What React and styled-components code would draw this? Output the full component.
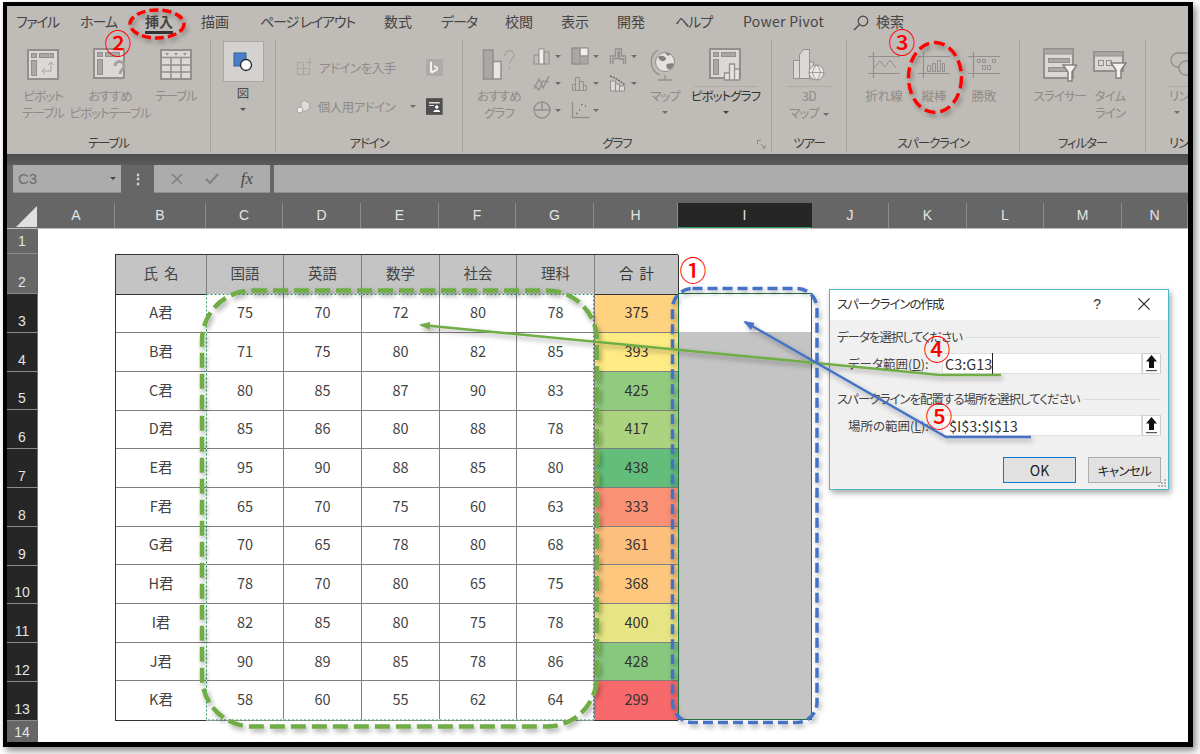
import React from 'react'
import styled, { createGlobalStyle } from 'styled-components'

const FONT = `"Noto Sans CJK JP", "Noto Sans", "Liberation Sans", sans-serif`
const DIM = '#8e8b88'
const LINE = '#928f8c'
const FILL = '#dbd9d7'
const PANEL = '#aaa8a5'

const Global = createGlobalStyle`
  html, body { margin: 0; padding: 0; background: #fff; }
  body { font-family: ${FONT}; font-feature-settings: "palt"; }
`

const Page = styled.div`
  position: relative;
  width: 1200px;
  height: 754px;
  overflow: hidden;
  background: #fff;
`
const Frame = styled.div`
  box-sizing: border-box;
  margin: 2px 0 0 3px;
  width: 1190px;
  height: 745px;
  border-style: solid;
  border-color: #000;
  border-width: 4px 5px 5px 4px;
  box-shadow: 3px 4px 7px rgba(0, 0, 0, 0.45);
  display: flex;
  flex-direction: column;
  overflow: hidden;
`

/* ribbon */
const Ribbon = styled.div`
  height: 148px;
  flex: none;
  background: #bfbbb7;
  overflow: hidden;
`
const Tabs = styled.div`
  height: 34px;
  display: flex;
  align-items: flex-start;
  padding: 5px 0 0 9px;
  box-sizing: border-box;
`
const Tab = styled.div`
  flex: none;
  width: ${(p) => p.$w}px;
  font-size: 14px;
  color: #454545;
  white-space: nowrap;
  display: flex;
  align-items: center;
  gap: 7px;
`
const TabText = styled.span`
  display: block;
  line-height: 20px;
  height: 23px;
  box-sizing: border-box;
  letter-spacing: ${(p) => p.$ls || 0}px;
  border-bottom: ${(p) => (p.$active ? '3px solid #333' : 'none')};
  font-weight: ${(p) => (p.$active ? 700 : 400)};
`
const Groups = styled.div`
  display: flex;
  height: 112px;
`
const Group = styled.div`
  flex: none;
  box-sizing: border-box;
  width: ${(p) => p.$w}px;
  display: flex;
  flex-direction: column;
  border-right: ${(p) => (p.$last ? 'none' : '1px solid #a5a29f')};
  position: relative;
`
const GroupBody = styled.div`
  height: 97px;
  display: flex;
  justify-content: ${(p) => p.$justify || 'flex-start'};
  padding-left: ${(p) => p.$pad || 0}px;
`
const GroupLabel = styled.div`
  text-align: ${(p) => (p.$left ? 'left' : 'center')};
  padding-left: ${(p) => (p.$left ? 23 : 0)}px;
  font-size: 12.5px;
  line-height: 18px;
  letter-spacing: -1.1px;
  color: #3d3d3d;
  white-space: nowrap;
`
const Launcher = styled.svg`
  position: absolute;
  right: 5px;
  bottom: 3px;
`
const BigButton = styled.div`
  flex: none;
  width: ${(p) => p.$w}px;
  display: flex;
  flex-direction: column;
  align-items: ${(p) => (p.$left ? 'flex-start' : 'center')};
  padding-left: ${(p) => (p.$left ? 23 : 0)}px;
  padding-top: 8px;
  box-sizing: border-box;
`
const IconSlot = styled.div`
  height: 34px;
  display: flex;
  align-items: center;
  justify-content: center;
`
const SplitLine = styled.div`
  flex: none;
  width: ${(p) => p.$w}px;
  height: 1px;
  margin: 4px 0 -5px;
  background: #aeaba8;
`
const BtnText = styled.div`
  margin-top: ${(p) => p.$top ?? 5}px;
  font-size: 12.5px;
  line-height: 17px;
  letter-spacing: ${(p) => (p.$kanji ? 0 : -0.9)}px;
  color: ${(p) => p.$color || DIM};
  white-space: nowrap;
  text-align: center;
`
const Caret = styled.span`
  display: inline-block;
  width: 0;
  height: 0;
  border-left: 3px solid transparent;
  border-right: 3px solid transparent;
  border-top: 3px solid ${(p) => p.$color || '#6f6d6b'};
  margin-left: ${(p) => p.$ml || 0}px;
  vertical-align: middle;
`
const CaretRow = styled.div`
  height: 16px;
  display: flex;
  align-items: center;
  justify-content: center;
`
const PictureBox = styled.div`
  width: 41px;
  height: 41px;
  margin-top: -7px;
  background: #d4d2cf;
  border: 1px solid #a9a6a3;
  display: flex;
  align-items: center;
  justify-content: center;
  box-sizing: border-box;
`
const AddinList = styled.div`
  display: flex;
  flex-direction: column;
  gap: 15px;
  padding: 15px 0 0 20px;
`
const AddinRow = styled.div`
  display: flex;
  align-items: center;
  height: 24px;
  width: 147px;
  font-size: 12.5px;
  letter-spacing: -0.5px;
  color: ${DIM};
  white-space: nowrap;
  gap: 5px;
`
const Push = styled.div`
  flex: 1;
`
const MiniGrid = styled.div`
  flex: none;
  width: 107px;
  display: grid;
  grid-template-columns: 38px 38px 30px;
  grid-auto-rows: 27px;
  padding-top: 3px;
  margin-left: -2px;
`
const MiniItem = styled.div`
  display: flex;
  align-items: center;
  gap: 3px;
`

/* formula bar */
const DarkBand = styled.div`
  height: 11px;
  flex: none;
  background: linear-gradient(#4a4a4a, #5c5c5c);
`
const FormulaBar = styled.div`
  height: 28px;
  flex: none;
  display: flex;
  background: #666;
  padding-left: 6px;
  align-items: stretch;
`
const NameBox = styled.div`
  width: 108px;
  background: #acacac;
  color: #6b6b6b;
  font-family: "Liberation Sans", sans-serif;
  font-size: 15px;
  display: flex;
  align-items: center;
  justify-content: space-between;
  padding: 0 5px;
  box-sizing: border-box;
  border-bottom: 1px solid #8f8f8f;
`
const Dots = styled.div`
  width: 33px;
  color: #ddd;
  font-weight: 700;
  font-size: 14px;
  text-align: center;
  line-height: 26px;
`
const FxBox = styled.div`
  width: 116px;
  background: #acacac;
  display: flex;
  align-items: center;
  justify-content: space-around;
  padding: 0 6px;
  box-sizing: border-box;
  border-bottom: 1px solid #8f8f8f;
`
const Fx = styled.span`
  font-family: "Liberation Serif", serif;
  font-style: italic;
  font-size: 17px;
  color: #4a4a4a;
`
const FormulaInput = styled.div`
  flex: 1;
  margin-left: 4px;
  background: #acacac;
  border-bottom: 1px solid #8f8f8f;
`

/* sheet */
const ColHeaders = styled.div`
  height: 36px;
  flex: none;
  box-sizing: border-box;
  background: #666;
  display: flex;
  align-items: flex-end;
  border-bottom: 1px solid #bcbcbc;
`
const Corner = styled.div`
  width: 31px;
  height: 25px;
  flex: none;
  display: flex;
  justify-content: flex-end;
  align-items: flex-end;
`
const ColHead = styled.div`
  flex: none;
  width: ${(p) => p.$w}px;
  height: 25px;
  box-sizing: border-box;
  text-align: center;
  font-family: "Liberation Sans", sans-serif;
  font-size: 14px;
  line-height: 25px;
  color: #e4e4e4;
  background: ${(p) => (p.$on ? '#262626' : 'transparent')};
  border-right: 1px solid ${(p) => (p.$on ? '#262626' : '#8c8c8c')};
  box-shadow: ${(p) => (p.$on ? 'inset 0 -1px 0 #2f9a5f' : 'none')};
`
const SheetArea = styled.div`
  flex: 1;
  display: flex;
  min-height: 0;
`
const RowHeaders = styled.div`
  width: 31px;
  flex: none;
  background: #666;
`
const RowHead = styled.div`
  height: ${(p) => p.$h}px;
  box-sizing: border-box;
  text-align: center;
  font-family: "Liberation Sans", sans-serif;
  font-size: 14px;
  line-height: 20px;
  color: #e4e4e4;
  display: flex;
  align-items: ${(p) => (p.$center ? 'center' : 'flex-end')};
  justify-content: center;
  padding-bottom: ${(p) => (p.$center ? 0 : 1)}px;
  background: ${(p) => (p.$on ? '#262626' : '#666')};
  border-bottom: 1px solid #8c8c8c;
  border-right: 1px solid ${(p) => (p.$on ? '#2f9a5f' : '#666')};
`
const SheetBody = styled.div`
  flex: 1;
  background: #fff;
  display: flex;
  align-items: flex-start;
  padding: 25px 0 0 77px;
`
const Table = styled.div`
  display: grid;
  grid-template-columns: 91px 77px 78px 78px 77px 78px 84px;
  grid-template-rows: 39.5px repeat(11, 38.7px);
  box-sizing: border-box;
  width: 563px;
  border-top: 1px solid #333;
  border-left: 1px solid #333;
  border-bottom: 1px solid #333;
  flex: none;
`
const Cell = styled.div`
  box-sizing: border-box;
  display: flex;
  align-items: center;
  justify-content: center;
  padding-bottom: 3px;
  font-size: 14.5px;
  word-spacing: 3px;
  color: ${(p) => (p.$edge ? '#333' : '#444')};
  white-space: pre;
  background: ${(p) => p.$bg || '#fff'};
  border-right: 1px solid ${(p) => (p.$edge ? '#333' : '#7f7f7f')};
  border-bottom: 1px solid ${(p) => (p.$head ? '#333' : p.$end ? 'transparent' : '#7f7f7f')};
`
const SelectColumn = styled.div`
  width: 134px;
  height: 427px;
  margin-top: 39px;
  flex: none;
  box-sizing: border-box;
  border: 1px solid #217346;
  background: linear-gradient(#fff 38px, #c4c4c4 38px);
`

/* dialog */
const Dialog = styled.div`
  position: absolute;
  left: 829px;
  top: 289px;
  width: 340px;
  height: 201px;
  box-sizing: border-box;
  background: #f0f0f0;
  border: 1.5px solid #4db8cc;
  box-shadow: 2px 3px 6px rgba(0, 0, 0, 0.35);
  display: flex;
  flex-direction: column;
`
const DialogTitle = styled.div`
  height: 30px;
  flex: none;
  box-sizing: border-box;
  background: #fff;
  display: flex;
  align-items: center;
  padding: 0 18px 3px 7px;
  font-size: 12.5px;
  letter-spacing: -1px;
  color: #333;
`
const HelpMark = styled.span`
  font-family: "Liberation Sans", sans-serif;
  font-size: 14px;
  margin-right: 38px;
  color: #333;
`
const Legend = styled.div`
  display: flex;
  align-items: center;
  font-size: 12.5px;
  line-height: 16px;
  letter-spacing: -1px;
  color: #444;
  padding: ${(p) => p.$top}px 8px 0 7px;
  gap: 3px;
  &::after {
    content: '';
    flex: 1;
    border-top: 1px solid #dcdcdc;
  }
`
const Field = styled.div`
  display: flex;
  align-items: center;
  height: 21px;
  margin-top: 8px;
  padding-left: 18px;
`
const FieldLabel = styled.div`
  width: 94px;
  flex: none;
  font-size: 12.5px;
  color: #444;
  white-space: nowrap;
`
const FieldInput = styled.div`
  width: 200px;
  height: 21px;
  flex: none;
  box-sizing: border-box;
  background: #fff;
  border: 1px solid #e0e0e0;
  font-family: ${FONT};
  font-size: 14.5px;
  line-height: 19px;
  color: #333;
  padding-left: ${(p) => p.$pad}px;
`
const Cursor = styled.span`
  border-right: 1px solid #222;
`
const UpBtn = styled.div`
  width: 19px;
  height: 21px;
  flex: none;
  box-sizing: border-box;
  background: #fff;
  border: 1px solid #cfcfcf;
  display: flex;
  align-items: center;
  justify-content: center;
`
const DialogActions = styled.div`
  display: flex;
  justify-content: flex-end;
  gap: 12px;
  padding: 21px 7px 0 0;
`
const DialogBtn = styled.div`
  width: 73px;
  height: 26px;
  box-sizing: border-box;
  display: flex;
  align-items: center;
  justify-content: center;
  background: #e1e1e1;
  border: 1.5px solid ${(p) => (p.$primary ? '#0a7ad1' : '#adadad')};
  font-size: ${(p) => (p.$primary ? 14 : 12.5)}px;
  letter-spacing: ${(p) => (p.$primary ? 0 : -0.6)}px;
  color: #222;
`
const Grip = styled.svg`
  position: absolute;
  right: 1px;
  bottom: 1px;
`

/* notes drawn over the screenshot */
const Overlay = styled.svg`
  position: absolute;
  left: 0;
  top: 0;
  pointer-events: none;
`
const Badge = styled.span`
  position: absolute;
  left: ${(p) => p.$x - 14}px;
  top: ${(p) => p.$y - 18}px;
  width: 28px;
  height: 36px;
  line-height: 36px;
  text-align: center;
  font-size: 27px;
  font-weight: 500;
  font-feature-settings: normal;
  color: #f00;
`

const Pivot = () => (
  <svg width="32" height="32" viewBox="0 0 32 32" fill="none" stroke={LINE}>
    <rect x="1" y="1" width="30" height="29" fill={FILL} strokeWidth="2" />
    <rect x="4.5" y="4.5" width="5" height="4" fill={PANEL} />
    <rect x="12.5" y="4.5" width="14" height="4" fill={PANEL} />
    <rect x="4.5" y="11.5" width="5" height="15" fill={PANEL} />
    <path d="M24 13v9h-9m3-3-3 3 3 3M21 16l3-3 3 3" stroke="#a5a3a0" />
  </svg>
)
const PivotHelp = () => (
  <svg width="34" height="34" viewBox="0 0 34 34" fill="none" stroke={LINE}>
    <rect x="1" y="1" width="30" height="29" fill={FILL} strokeWidth="2" />
    <rect x="4.5" y="4.5" width="5" height="4" fill={PANEL} />
    <rect x="12.5" y="4.5" width="14" height="4" fill={PANEL} />
    <rect x="4.5" y="11.5" width="5" height="15" fill={PANEL} />
    <path d="M22 18c0-6 9-6 9 0 0 4-4 3.500-4 8" strokeWidth="3" stroke="#a3a09d" />
    <circle cx="27" cy="31" r="1.600" fill="#a3a09d" stroke="none" />
  </svg>
)
const TableIcon = () => (
  <svg width="32" height="32" viewBox="0 0 32 32" fill={FILL} stroke={LINE}>
    <rect x="1" y="1" width="30" height="29" strokeWidth="2" />
    <path d="M1.500 8.500h29M1.500 16h29M1.500 23h29M11 8.500v22M21 8.500v22" fill="none" strokeWidth="1.500" />
    <path d="M5 4h4l-2 2.500zM14 4h4l-2 2.500zM23 4h4l-2 2.500z" fill={LINE} stroke="none" />
  </svg>
)
const PictureIcon = () => (
  <svg width="20" height="20" viewBox="0 0 20 20">
    <rect x="1" y="1" width="12" height="13" fill="#4a7fc8" stroke="#2f5f9f" />
    <circle cx="13" cy="13" r="5.500" fill="#fff" stroke="#222" strokeWidth="1.300" />
  </svg>
)
const GetAddin = () => (
  <svg width="18" height="18" viewBox="0 0 18 18" fill="none" stroke="#a7a4a1">
    <path d="M1.500 4.500h6v6h-6zM1.500 10.500h6v6h-6zM7.500 10.500h6v6h-6zM13.500 1v7M10 4.500h7" />
  </svg>
)
const Bing = () => (
  <svg width="17" height="17" viewBox="0 0 17 17">
    <rect width="17" height="17" fill="#aeaba8" />
    <path d="M6 3v9l5-2.500-2.500-1 -1-2.500 4.500 2v3l-6 3.500-2-1.500V2.500z" fill="#f2f2f2" />
  </svg>
)
const MyAddin = () => (
  <svg width="17" height="17" viewBox="0 0 17 17">
    <path d="M8 2l6 3v6l-6 3-3-2V5z" fill="#dcdad7" stroke="#a7a4a1" />
    <circle cx="4" cy="12" r="3" fill="#efeeec" stroke="#a7a4a1" />
  </svg>
)
const StoreIcon = () => (
  <svg width="17" height="17" viewBox="0 0 17 17">
    <rect width="17" height="17" fill="#4e4e4e" />
    <path d="M3 4h11v1.500H3zM3 7h5v1H3z" fill="#ddd" />
    <circle cx="11" cy="9" r="1.800" fill="#fff" />
    <path d="M7.500 14c0-3 7-3 7 0z" fill="#fff" />
  </svg>
)
const RecChart = () => (
  <svg width="34" height="34" viewBox="0 0 34 34" fill="none" stroke={LINE}>
    <rect x="1.500" y="2" width="9.500" height="29" fill={PANEL} strokeWidth="1.500" />
    <rect x="11" y="13.500" width="8" height="17.500" fill="#e8e6e4" strokeWidth="1.500" />
    <path d="M23 8c0-7 9-7 9-1 0 4-4.500 4-4.500 9M27.500 19v2.500" stroke="#a3a09d" strokeWidth="1.200" />
  </svg>
)
const miniCharts = [
  <g key="bar">
    <rect x="1" y="8" width="5" height="9" />
    <rect x="6" y="2" width="5" height="15" fill="#f0efed" />
    <rect x="11" y="5" width="5" height="12" />
  </g>,
  <g key="tree">
    <rect x="1" y="1" width="16" height="16" fill="#aaa8a5" />
    <rect x="9" y="1" width="8" height="8" fill="#f0efed" />
    <rect x="1" y="1" width="8" height="16" />
    <path d="M9 9h8" />
  </g>,
  <path key="water" d="M1.500 17V9h5V2h6v7h4v8M4 17V11.500h5V4.500h1.500V12h4v5" strokeWidth="1.300" />,
  <g key="line" strokeWidth="1.200">
    <path d="M1 11l5 5 4-9 6 1M1 15l5-10 4 9 6-12" />
  </g>,
  <path key="stat" d="M1.500 16.500v-6h3v6zM4.500 16.500v-13h4v13zM8.500 16.500v-9h4v9zM12.500 16.500v-5h3v5z" />,
  <g key="combo">
    <path d="M1.500 17V7h5v10zM6.500 17V10h4v7zM10.500 17v-5h5v5z" fill={FILL} />
    <path d="M1 2l5 2 5 3 5 4" stroke="#6f6d6b" strokeWidth="1.500" strokeDasharray="2 1" />
  </g>,
  <g key="pie" strokeWidth="1.400">
    <circle cx="9" cy="9" r="8" />
    <path d="M9 1v8H1" />
    <path d="M9 9h8" />
  </g>,
  <g key="scatter" strokeWidth="1.300">
    <path d="M1.500 1v15.500h17" />
    <path d="M5 12.500h1.500M10 3.500h1.500M14 5h1M8 9h1" stroke="#6f6d6b" />
  </g>,
]
const MiniChart = ({ children }) => (
  <MiniItem>
    <svg width="19" height="19" viewBox="0 0 19 19" fill="none" stroke={LINE}>
      {children}
    </svg>
    <Caret />
  </MiniItem>
)
const Globe = () => (
  <svg width="30" height="34" viewBox="0 0 30 34" fill="none" stroke={LINE}>
    <circle cx="15" cy="14" r="9.500" fill="#e4e2df" />
    <path d="M8 9c3-2 5-1 7 0s1 3-1 4-4 0-6-4zM17 16c3-1 6-1 7 0-1 4-4 6-6 5s-2-4-1-5zM15 5c2 0 4 0 6 1l-3 2z" fill="#84827f" stroke="none" />
    <path d="M8 2a14 14 0 0 0 2 25M8 32h14M15 27v5" strokeWidth="1.300" />
  </svg>
)
const PivotChart = () => (
  <svg width="34" height="34" viewBox="0 0 34 34" fill="none" stroke={LINE}>
    <rect x="1" y="1" width="30" height="29" fill={FILL} strokeWidth="2" />
    <rect x="4.500" y="4.500" width="5" height="4" fill={PANEL} />
    <rect x="12.500" y="4.500" width="14" height="4" fill={PANEL} />
    <rect x="4.500" y="11.500" width="5" height="15" fill={PANEL} />
    <path d="M15.500 32v-7h5v7zM20.500 32V16h5v16zM25.500 32V21h5v11z" fill="#e6e4e2" strokeWidth="1.300" />
  </svg>
)
const Map3D = () => (
  <svg width="34" height="34" viewBox="0 0 34 34" fill="none" stroke={LINE}>
    <path d="M1.500 12.500h6v18h-6zM7.500 6.500l4-5h6v29h-10zM17.500 14h4v17h-4z" fill={FILL} />
    <circle cx="24.500" cy="24.500" r="7.500" fill="#e8e6e4" />
    <path d="M17 24.500h15M24.500 17c-5 5-5 10 0 15M24.500 17c5 5 5 10 0 15" strokeWidth="0.800" />
  </svg>
)
const Spark = ({ children }) => (
  <svg width="32" height="28" viewBox="0 0 32 28" fill="none" stroke={LINE}>
    <path d="M0 5.500h32M0 22.500h32M5.500 1v26" strokeWidth="1.200" />
    {children}
  </svg>
)
const Funnel = ({ d }) => <path d={d} fill="#f3f2f0" stroke="#84827f" strokeWidth="1.500" />
const Slicer = () => (
  <svg width="34" height="34" viewBox="0 0 34 34" fill="none" stroke={LINE}>
    <rect x="1" y="1" width="29" height="29" fill={FILL} strokeWidth="2" />
    <rect x="1" y="1" width="29" height="5" fill={PANEL} />
    <rect x="5.500" y="10.500" width="21" height="4" fill={PANEL} />
    <rect x="5.500" y="19.500" width="21" height="4" fill={PANEL} />
    <Funnel d="M20 17h14l-5 7v9h-4v-9z" />
  </svg>
)
const Timeline = () => (
  <svg width="34" height="28" viewBox="0 0 34 28" fill="none" stroke={LINE}>
    <rect x="1" y="1" width="29" height="19" fill={FILL} strokeWidth="2" />
    <rect x="1" y="1" width="29" height="4" fill={PANEL} />
    <rect x="5.500" y="9.500" width="5" height="5" />
    <rect x="13.500" y="9.500" width="5" height="5" />
    <Funnel d="M18 12h15l-5 7v8h-5v-8z" />
  </svg>
)
const LinkIcon = () => (
  <svg width="30" height="30" viewBox="0 0 30 30" fill="none" stroke={LINE} strokeWidth="1.300">
    <rect x="2" y="3" width="22" height="14" rx="7" />
    <rect x="10" y="11" width="22" height="14" rx="7" fill="#bfbbb7" />
  </svg>
)
const Arrow = () => (
  <svg width="13" height="17" viewBox="0 0 13 17" fill="#111">
    <path d="M6.500 0L12 6.500H9V13H4V6.500H1z" />
    <rect x="1" y="15" width="11" height="1.200" fill="#555" />
  </svg>
)

const tabs = [
  ['ファイル', 64, -1.5], ['ホーム', 65, -1], ['挿入', 56, 0], ['描画', 59, 0], ['ページ レイアウト', 124, -1.2],
  ['数式', 57, 0], ['データ', 64, -1], ['校閲', 56, 0], ['表示', 56, 0], ['開発', 58, 0], ['ヘルプ', 68, -1],
  ['Power Pivot', 110, 0.3],
]
const columns = [
  ['A', 77], ['B', 91], ['C', 77], ['D', 78], ['E', 78], ['F', 77], ['G', 78], ['H', 84], ['I', 134],
  ['J', 77], ['K', 78], ['L', 77], ['M', 78], ['N', 66],
]
const heads = ['氏 名', '国語', '英語', '数学', '社会', '理科', '合 計']
const rows = [
  ['A君', 75, 70, 72, 80, 78, 375, '#fed27f'],
  ['B君', 71, 75, 80, 82, 85, 393, '#ffeb84'],
  ['C君', 80, 85, 87, 90, 83, 425, '#90cb7e'],
  ['D君', 85, 86, 80, 88, 78, 417, '#acd37f'],
  ['E君', 95, 90, 88, 85, 80, 438, '#63be7b'],
  ['F君', 65, 70, 75, 60, 63, 333, '#fa9074'],
  ['G君', 70, 65, 78, 80, 68, 361, '#fdc07c'],
  ['H君', 78, 70, 80, 65, 75, 368, '#fdc87d'],
  ['I君', 82, 85, 80, 75, 78, 400, '#e7e483'],
  ['J君', 90, 89, 85, 78, 86, 428, '#86c87d'],
  ['K君', 58, 60, 55, 62, 64, 299, '#f8696b'],
]
const rowHeads = [
  [1, 25, false], [2, 40, false], [3, 38.8, true], [4, 38.8, true], [5, 38.8, true], [6, 38.8, true],
  [7, 38.8, true], [8, 38.8, true], [9, 38.8, true], [10, 38.8, true], [11, 38.8, true], [12, 38.8, true],
  [13, 38.8, true], [14, 23, false],
]

export default function App() {
  return (
    <Page>
      <Global />
      <Frame>
        <Ribbon>
          <Tabs>
            {tabs.map(([t, w, ls]) => (
              <Tab key={t} $w={w}>
                <TabText $active={t === '挿入'} $ls={ls}>{t}</TabText>
              </Tab>
            ))}
            <Tab $w={60}>
              <svg width="16" height="16" viewBox="0 0 16 16" fill="none" stroke="#444" strokeWidth="1.200">
                <circle cx="10" cy="6" r="4.800" />
                <path d="M6.500 9.500L1 15" />
              </svg>
              <TabText>検索</TabText>
            </Tab>
          </Tabs>
          <Groups>
            <Group $w={204}>
              <GroupBody>
                <BigButton $w={72}><IconSlot><Pivot /></IconSlot><BtnText>ピボット<br />テーブル</BtnText></BigButton>
                <BigButton $w={62}><IconSlot><PivotHelp /></IconSlot><BtnText>おすすめ<br />ピボットテーブル</BtnText></BigButton>
                <BigButton $w={70}><IconSlot><TableIcon /></IconSlot><BtnText>テーブル</BtnText></BigButton>
              </GroupBody>
              <GroupLabel>テーブル</GroupLabel>
            </Group>
            <Group $w={65}>
              <GroupBody $justify="center">
                <BigButton $w={41}>
                  <PictureBox><PictureIcon /></PictureBox>
                  <BtnText $top={2} $kanji $color="#4a4a4a">図</BtnText>
                  <CaretRow><Caret $color="#555" /></CaretRow>
                </BigButton>
              </GroupBody>
            </Group>
            <Group $w={187}>
              <GroupBody>
                <AddinList>
                  <AddinRow><GetAddin />アドインを入手<Push /><Bing /></AddinRow>
                  <AddinRow><MyAddin />個人用アドイン<Caret $ml={10} /><Push /><StoreIcon /></AddinRow>
                </AddinList>
              </GroupBody>
              <GroupLabel>アドイン</GroupLabel>
            </Group>
            <Group $w={309}>
              <GroupBody>
                <BigButton $w={72}><IconSlot><RecChart /></IconSlot><BtnText>おすすめ<br />グラフ</BtnText></BigButton>
                <MiniGrid>
                  {miniCharts.map((c) => (
                    <MiniChart key={c.key}>{c}</MiniChart>
                  ))}
                </MiniGrid>
                <BigButton $w={50}>
                  <IconSlot><Globe /></IconSlot>
                  <BtnText>マップ</BtnText>
                  <CaretRow><Caret /></CaretRow>
                </BigButton>
                <BigButton $w={71}>
                  <IconSlot><PivotChart /></IconSlot>
                  <SplitLine $w={64} />
                  <BtnText $color="#333">ピボットグラフ</BtnText>
                  <CaretRow><Caret $color="#444" /></CaretRow>
                </BigButton>
              </GroupBody>
              <GroupLabel>グラフ</GroupLabel>
              <Launcher width="9" height="9" viewBox="0 0 9 9" fill="none" stroke="#8a8885">
                <path d="M.5 4V.5H4M4 4l4 4M5 8h3V5" />
              </Launcher>
            </Group>
            <Group $w={75}>
              <GroupBody $justify="center">
                <BigButton $w={60}>
                  <IconSlot><Map3D /></IconSlot>
                  <SplitLine $w={46} />
                  <BtnText>3D<br />マップ<Caret $ml={4} /></BtnText>
                </BigButton>
              </GroupBody>
              <GroupLabel>ツアー</GroupLabel>
            </Group>
            <Group $w={173}>
              <GroupBody $pad={12}>
                <BigButton $w={50}>
                  <IconSlot><Spark><path d="M6 17l6-7 5 6 5-7 6 8" /></Spark></IconSlot>
                  <BtnText $kanji>折れ線</BtnText>
                </BigButton>
                <BigButton $w={50}>
                  <IconSlot><Spark><path d="M9.500 14.500h3v6h-3zM14.500 12.500h3v8h-3zM19.500 9.500h3v11h-3zM24.500 12.500h2v8h-2z" /></Spark></IconSlot>
                  <BtnText $kanji>縦棒</BtnText>
                </BigButton>
                <BigButton $w={50}>
                  <IconSlot><Spark><path d="M9.500 8.500h3v3h-3zM14.500 8.500h3v3h-3zM24.500 8.500h3v3h-3zM19.500 14.500h3v4h-3zM14.500 14.500h3v4h-3z" /></Spark></IconSlot>
                  <BtnText $kanji>勝敗</BtnText>
                </BigButton>
              </GroupBody>
              <GroupLabel>スパークライン</GroupLabel>
            </Group>
            <Group $w={126}>
              <GroupBody $pad={15}>
                <BigButton $w={50}><IconSlot><Slicer /></IconSlot><BtnText>スライサー</BtnText></BigButton>
                <BigButton $w={50}><IconSlot><Timeline /></IconSlot><BtnText>タイム<br />ライン</BtnText></BigButton>
              </GroupBody>
              <GroupLabel>フィルター</GroupLabel>
            </Group>
            <Group $w={42} $last>
              <GroupBody>
                <BigButton $w={42} $left>
                  <IconSlot><LinkIcon /></IconSlot>
                  <SplitLine $w={19} />
                  <BtnText>リン</BtnText>
                  <CaretRow><Caret $ml={5} /></CaretRow>
                </BigButton>
              </GroupBody>
              <GroupLabel $left>リン</GroupLabel>
            </Group>
          </Groups>
        </Ribbon>
        <DarkBand />
        <FormulaBar>
          <NameBox>C3<Caret $color="#444" /></NameBox>
          <Dots>⋮</Dots>
          <FxBox>
            <svg width="12" height="12" viewBox="0 0 12 12" stroke="#7f7f7f" strokeWidth="1.500"><path d="M1 1l10 10M11 1L1 11" /></svg>
            <svg width="14" height="12" viewBox="0 0 14 12" fill="none" stroke="#7f7f7f" strokeWidth="2"><path d="M1 6l4 4 8-9" /></svg>
            <Fx>fx</Fx>
          </FxBox>
          <FormulaInput />
        </FormulaBar>
        <ColHeaders>
          <Corner>
            <svg width="23" height="23" viewBox="0 0 23 23"><path d="M22 1v21H1z" fill="#e0e0e0" /></svg>
          </Corner>
          {columns.map(([c, w]) => (
            <ColHead key={c} $w={w} $on={c === 'I'}>{c}</ColHead>
          ))}
        </ColHeaders>
        <SheetArea>
          <RowHeaders>
            {rowHeads.map(([n, h, on]) => (
              <RowHead key={n} $h={h} $on={on} $center={n === 1}>{n}</RowHead>
            ))}
          </RowHeaders>
          <SheetBody>
            <Table>
              {heads.map((h, i) => (
                <Cell key={h} $head $bg="#c4c4c4" $edge={i === 6}>{h}</Cell>
              ))}
              {rows.map((r, ri) =>
                r.slice(0, 7).map((v, i) => (
                  <Cell key={`${ri}-${i}`} $edge={i === 6} $end={ri === 10} $bg={i === 6 ? r[7] : undefined}>{v}</Cell>
                )),
              )}
            </Table>
            <SelectColumn />
          </SheetBody>
        </SheetArea>
      </Frame>

      <Dialog>
        <DialogTitle>
          スパークラインの作成
          <Push />
          <HelpMark>?</HelpMark>
          <svg width="12" height="12" viewBox="0 0 12 12" stroke="#333" strokeWidth="1.100"><path d="M.5.5l11 11M11.500.5l-11 11" /></svg>
        </DialogTitle>
        <Legend $top={9}>データを選択してください</Legend>
        <Field>
          <FieldLabel>データ範囲(<u>D</u>):</FieldLabel>
          <FieldInput $pad={2}>C3:G13<Cursor /></FieldInput>
          <UpBtn><Arrow /></UpBtn>
        </Field>
        <Legend $top={17}>スパークラインを配置する場所を選択してください</Legend>
        <Field>
          <FieldLabel>場所の範囲(<u>L</u>):</FieldLabel>
          <FieldInput $pad={6}>$I$3:$I$13</FieldInput>
          <UpBtn><Arrow /></UpBtn>
        </Field>
        <DialogActions>
          <DialogBtn $primary>OK</DialogBtn>
          <DialogBtn>キャンセル</DialogBtn>
        </DialogActions>
        <Grip width="10" height="10" viewBox="0 0 10 10" fill="#b5b5b5">
          <path d="M7 1h2v2H7zM4 4h2v2H4zM7 4h2v2H7zM1 7h2v2H1zM4 7h2v2H4zM7 7h2v2H7z" />
        </Grip>
      </Dialog>

      <Overlay width="1200" height="754" viewBox="0 0 1200 754" fill="none">
        <defs>
          <filter id="shade" x="-10%" y="-10%" width="125%" height="125%">
            <feDropShadow dx="2" dy="3" stdDeviation="2.500" floodColor="#000" floodOpacity="0.35" />
          </filter>
          <marker id="headGreen" markerWidth="12" markerHeight="10" refX="9" refY="4" orient="auto" markerUnits="userSpaceOnUse">
            <path d="M0 0L11 4L0 8z" fill="#70ad47" />
          </marker>
          <marker id="headBlue" markerWidth="12" markerHeight="10" refX="9" refY="4" orient="auto" markerUnits="userSpaceOnUse">
            <path d="M0 0L11 4L0 8z" fill="#4472c4" />
          </marker>
        </defs>
        <rect x="206.500" y="294.500" width="387" height="425.500" stroke="#fff" />
        <rect x="206.500" y="294.500" width="387" height="425.500" stroke="#2f9a5f" strokeDasharray="2 2" />
        <g filter="url(#shade)">
          <rect x="202" y="290.500" width="395" height="436" rx="50" stroke="#70ad47" strokeWidth="4.500" strokeDasharray="15 6" />
          <rect x="672.500" y="288.500" width="144.500" height="434" rx="20" stroke="#4472c4" strokeWidth="3.500" strokeDasharray="10 5" />
          <ellipse cx="157" cy="24" rx="27" ry="14" stroke="#f00" strokeWidth="3.500" strokeDasharray="9 4" />
          <ellipse cx="935" cy="77.500" rx="26.500" ry="35" stroke="#f00" strokeWidth="3.500" strokeDasharray="11 5" />
          <path d="M1001 375H940L421 325" stroke="#70ad47" strokeWidth="2.500" markerEnd="url(#headGreen)" />
          <path d="M1031 437H946L745 322" stroke="#4472c4" strokeWidth="2.500" markerEnd="url(#headBlue)" />
        </g>
      </Overlay>
      <Badge $x={693} $y={270}>①</Badge>
      <Badge $x={118} $y={43}>②</Badge>
      <Badge $x={902} $y={42}>③</Badge>
      <Badge $x={937} $y={349}>④</Badge>
      <Badge $x={939} $y={416}>⑤</Badge>
    </Page>
  )
}
